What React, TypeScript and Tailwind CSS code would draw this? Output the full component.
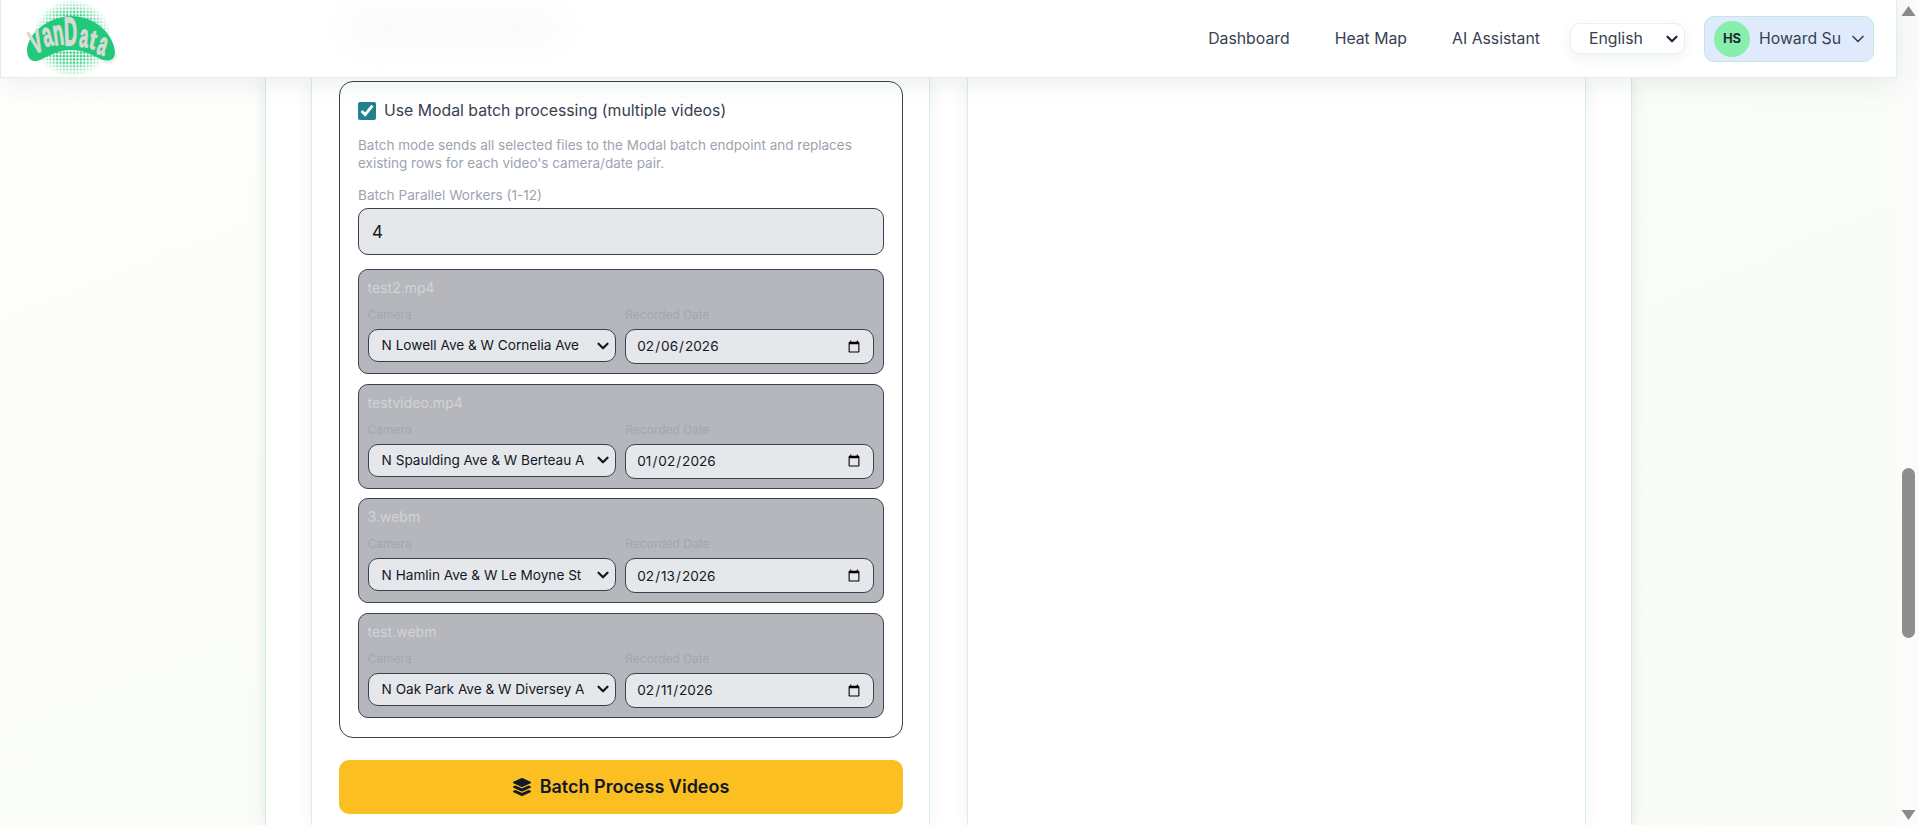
import { ChevronDown } from "lucide-react"
import { FaLayerGroup } from "react-icons/fa"

const font = { fontFamily: "Inter, 'Noto Sans', sans-serif" }

const videos = [
  { file: "test2.mp4", camera: "N Lowell Ave & W Cornelia Ave (North)", date: "2026-02-06" },
  { file: "testvideo.mp4", camera: "N Spaulding Ave & W Berteau Ave (North)", date: "2026-01-02" },
  { file: "3.webm", camera: "N Hamlin Ave & W Le Moyne St (North)", date: "2026-02-13" },
  { file: "test.webm", camera: "N Oak Park Ave & W Diversey Ave (North)", date: "2026-02-11" },
]

const logoLetters = [
  { c: "V", x: 33, y: 54, r: -20, sx: 0.9, sy: 1.6 },
  { c: "a", x: 44, y: 47, r: -14, sx: 0.85, sy: 1.7 },
  { c: "n", x: 53.5, y: 45.5, r: -8, sx: 0.85, sy: 1.8 },
  { c: "D", x: 63.5, y: 45.5, r: -2, sx: 0.9, sy: 2 },
  { c: "a", x: 77.5, y: 46.5, r: 6, sx: 0.8, sy: 1.6 },
  { c: "t", x: 87, y: 48, r: 12, sx: 1, sy: 1.35 },
  { c: "a", x: 94.5, y: 53, r: 18, sx: 0.8, sy: 1.6 },
]

function Logo() {
  return (
    <svg width="130" height="78" viewBox="0 0 130 78" className="absolute left-0 top-0">
      <defs>
        <pattern id="dots" width="3.4" height="3.4" patternUnits="userSpaceOnUse">
          <circle cx="1.7" cy="1.7" r="1.25" fill="#22c97a" />
        </pattern>
        <radialGradient id="fade" cx="0.5" cy="0.5" r="0.5">
          <stop offset="0.6" stopColor="#fff" />
          <stop offset="1" stopColor="#000" />
        </radialGradient>
        <mask id="dotmask">
          <ellipse cx="71" cy="38" rx="40" ry="39" fill="url(#fade)" />
        </mask>
      </defs>
      <rect x="28" y="0" width="86" height="78" fill="url(#dots)" mask="url(#dotmask)" />
      <path d="M100 62C108 66 117 62 116 52L112 60Z" fill="#ececec" />
      <path
        d="M26 50C27 36 42 18 70 16C96 16 113 36 114 52C114 59 110 62 102 60C92 56 84 50 70 50C54 50 46 58 36 61C29 62 26 57 26 50Z"
        fill="#22c97a"
      />
      {logoLetters.map((l, i) => (
        <text
          key={i}
          transform={`translate(${l.x} ${l.y}) rotate(${l.r}) scale(${l.sx} ${l.sy})`}
          fontFamily="Liberation Sans, sans-serif"
          fontWeight="700"
          fontSize="20"
          fill="#dbd9d5"
          stroke="#dbd9d5"
          strokeWidth="0.7"
        >
          {l.c}
        </text>
      ))}
    </svg>
  )
}

function VideoRow({ file, camera, date }: { file: string; camera: string; date: string }) {
  return (
    <div className="h-[105px] rounded-[10px] border border-[#374151] bg-[#b6b7bc] pl-[8.6px] pr-[9px] pt-[8px]">
      <div className="text-[14px] leading-[20px] text-[#d1d3d8]">{file}</div>
      <div className="mt-[9px] grid grid-cols-2 gap-[9px]">
        <div>
          <div className="mb-[6px] text-[12px] leading-[16px] text-[#a0a6b2]">Camera</div>
          <div className="relative">
            <select
              defaultValue={camera}
              className="block h-[33px] w-full appearance-none rounded-[10px] border border-[#374151] bg-[#e5e7eb] pl-[13px] pr-[31px] text-[13.6px] text-[#111827]"
            >
              <option>{camera}</option>
            </select>
            <ChevronDown className="pointer-events-none absolute right-[4px] top-1/2 h-[18px] w-[18px] -translate-y-1/2 text-[#111827]" strokeWidth={3} />
          </div>
        </div>
        <div>
          <div className="mb-[6px] text-[12px] leading-[16px] text-[#a0a6b2]">Recorded Date</div>
          <input
            type="date"
            defaultValue={date}
            className="h-[35px] w-full rounded-[10px] border border-[#374151] bg-[#e5e7eb] px-[10px] text-[13.6px] text-[#111827]"
          />
        </div>
      </div>
    </div>
  )
}

export default function App() {
  return (
    <div className="flex h-screen overflow-hidden bg-white" style={font}>
      <div className="flex min-w-0 flex-1 flex-col">
        <header className="relative z-10 flex h-[78px] shrink-0 items-center justify-end overflow-hidden border-b border-l border-r border-[#dff3dc] bg-white pr-[22px] shadow-[0_6px_28px_rgba(30,70,50,0.08)]">
          <div className="absolute left-[345px] top-[10px] h-[34px] w-[215px] rounded-full bg-[#f9f9f9] blur-lg" />
          <Logo />
          <nav className="relative flex items-center gap-[45px] text-[15.8px] text-[#374151]">
            <span>Dashboard</span>
            <span>Heat Map</span>
            <span>AI Assistant</span>
          </nav>
          <div className="relative ml-[30px]">
            <select
              defaultValue="English"
              className="block h-[31px] w-[115px] appearance-none rounded-[10px] border border-[#e3f5e0] bg-white pl-[18px] text-[15.8px] text-[#374151] shadow-[0_4px_14px_rgba(30,70,50,0.07)]"
            >
              <option>English</option>
            </select>
            <ChevronDown className="pointer-events-none absolute right-[4px] top-1/2 h-[18px] w-[18px] -translate-y-1/2 text-[#1f2937]" strokeWidth={3} />
          </div>
          <div className="relative ml-[19px] flex h-[46px] w-[170px] items-center rounded-[10px] border border-[#bfe9e0] bg-[#dfeafc] pl-[9px]">
            <div className="flex h-[36px] w-[36px] items-center justify-center rounded-full bg-[#86efac] text-[13px] font-bold text-[#1f2937]">
              HS
            </div>
            <span className="ml-[9px] text-[15.8px] text-[#374151]">Howard Su</span>
            <ChevronDown className="ml-[7px] h-[20px] w-[20px] text-[#374151]" strokeWidth={2} />
          </div>
        </header>

        <main className="flex min-h-0 flex-1 justify-center bg-gradient-to-br from-[#fefefd] via-[#fafcf8] to-[#f9fbf7]">
          <section className="grid h-full w-[1367px] grid-cols-2 gap-[37px] border-x border-[#d5f0d6] bg-white px-[45px] shadow-[0_0_12px_rgba(20,70,50,0.10)]">
            <div className="border-x border-[#d9f1d6] bg-white pl-[27px] pr-[26px] pt-[3px] shadow-[0_0_14px_rgba(20,70,50,0.06)]">
              <div className="rounded-[14px] border border-[#374151] bg-white px-[18px] pb-[19px] pt-[19px]">
                <label className="flex items-center gap-[8px] text-[15.8px] leading-[20px] text-[#374151]">
                  <input type="checkbox" defaultChecked className="h-[18px] w-[18px] accent-[#23808f]" />
                  Use Modal batch processing (multiple videos)
                </label>
                <p className="mt-[15px] text-[13.5px] leading-[18px] text-[#9ca3af]">
                  Batch mode sends all selected files to the Modal batch endpoint and replaces
                  <br />
                  existing rows for each video's camera/date pair.
                </p>
                <div className="mt-[14px] text-[13.6px] leading-[18px] text-[#9ca3af]">Batch Parallel Workers (1-12)</div>
                <input
                  type="text"
                  defaultValue="4"
                  className="mt-[4px] block h-[47px] w-full rounded-[10px] border border-[#374151] bg-[#e5e7eb] px-[13px] text-[17px] text-[#111827]"
                />
                <div className="mt-[14px] flex flex-col gap-[9.67px]">
                  {videos.map((v) => (
                    <VideoRow key={v.file} {...v} />
                  ))}
                </div>
              </div>
              <button className="mt-[22px] flex h-[54px] w-full items-center justify-center gap-[9px] rounded-[10px] bg-[#fcbf22] text-[18px] font-semibold text-[#111827]">
                <FaLayerGroup className="h-[18px] w-[18px]" />
                Batch Process Videos
              </button>
            </div>
            <div className="border-x border-[#d9f1d6] bg-white shadow-[0_0_14px_rgba(20,70,50,0.06)]" />
          </section>
        </main>
      </div>

      {/* scrollbar */}
      <div className="flex w-[22px] shrink-0 flex-col items-center bg-[#fbfbfb] pl-[1px]">
        <svg width="15" height="12" viewBox="0 0 15 12" className="mt-[5px] shrink-0">
          <path d="M7.5 1L14.5 11H.5Z" fill="#8a8a8a" strokeLinejoin="round" />
        </svg>
        <div className="mt-[451px] h-[170px] w-[13px] shrink-0 rounded-full bg-[#8e8e8e]" />
        <svg width="15" height="12" viewBox="0 0 15 12" className="mt-[171px] shrink-0">
          <path d="M7.5 11L14.5 1H.5Z" fill="#8a8a8a" strokeLinejoin="round" />
        </svg>
      </div>
    </div>
  )
}
